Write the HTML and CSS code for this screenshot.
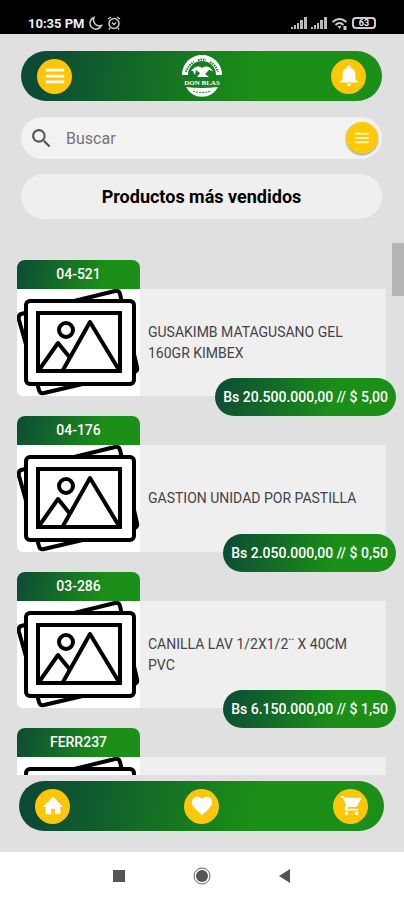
FILE: index.html
```html
<!DOCTYPE html>
<html lang="es">
<head>
  <meta charset="UTF-8" />
  <meta name="viewport" content="width=device-width, initial-scale=1.0"/>
  <title>Don Blas - Productos</title>
  <link rel="stylesheet" href="styles.css">
</head>
<body>
  <!-- Iconos reutilizables -->
  <svg class="sprite" aria-hidden="true">
    <symbol id="icon-menu" viewBox="0 0 24 24">
      <path d="M2 4h20v3H2zM2 10.500h20v3H2zM2 17h20v3H2z"/>
    </symbol>
    <symbol id="icon-signal" viewBox="0 0 16 12">
      <path d="M0 10h2v2H0zM3 8h2v4H3zM6 6h2v6H6zM9 3h3v9H9zM13 0h3v12h-3z"/>
    </symbol>
    <symbol id="photo" viewBox="0 0 123 107">
      <g fill="#fff" stroke="#000" stroke-width="4" stroke-linejoin="round">
        <path d="M4 25 98 2q4-1 5 3l17 73q1 4-3 5L27 104q-4 1-5-3L2 31q-1-5 2-6z"/>
        <rect x="9" y="12" width="108" height="83" rx="4"/>
        <path stroke-linejoin="miter" d="M21 24h82v58H21z"/>
        <path fill="none" d="M22 81 41 54l13 16M46 81 73 33l29 48"/>
        <circle cx="49" cy="41" r="7" fill="none"/>
      </g>
    </symbol>
  </svg>

  <div class="status-bar">
    <span class="clock">10:35 PM</span>
    <svg class="status-icon" viewBox="0 0 14 14"><path d="M5 1.500a6 6 0 1 0 7.500 8A6 6 0 0 1 5 1.500z" fill="none" stroke="#ccc" stroke-width="1.500"/></svg>
    <svg class="status-icon" viewBox="0 0 14 14"><g fill="none" stroke="#ccc" stroke-width="1.500"><circle cx="7" cy="7.500" r="5"/><path d="M1 3l3-2M13 3l-3-2M5 6.500l2 2 2-2M3 12l-1 1.500M11 12l1 1.500"/></g></svg>
    <div class="status-right">
      <svg class="signal"><use href="#icon-signal"/></svg>
      <svg class="signal"><use href="#icon-signal"/></svg>
      <svg class="wifi" viewBox="0 0 16 13"><g fill="none" stroke="#ccc" stroke-width="2"><path d="M1 5q7-6 14 0M4 8q4-4 8 0"/></g><path d="M6 9h4l-2 3zM12 9h3v4h-3z" fill="#ccc"/></svg>
      <span class="battery">63</span>
    </div>
  </div>

  <div class="app">
    <header class="bar">
      <button class="round-btn" aria-label="Menú"><svg viewBox="0 0 24 24"><use href="#icon-menu"/></svg></button>
      <svg class="logo" viewBox="0 0 42 42" role="img" aria-label="Don Blas">
        <path d="M4 20a17 17 0 0 1 34 0" fill="none" stroke="#fff" stroke-width="6"/>
        <path d="M5 17q2-7 8-10M17 5q4-1 8 0M29 7q6 3 8 10" fill="none" stroke="#17801a" stroke-width="2" stroke-dasharray="1.500 1"/>
        <path d="M10 16q6-7 11-3 6-4 11 3l-4-1-4 4 4 3H16l3-4-4-3-1 5-2-4z" fill="#fff"/>
        <path d="M5 32q16 2 32 0a18 18 0 0 1-32 0z" fill="#fff"/>
        <path d="M12 36q9 3 18 0" fill="none" stroke="#17801a" stroke-width="1" stroke-dasharray="2 1"/>
        <text x="21" y="30" text-anchor="middle">DON BLAS</text>
      </svg>
      <button class="round-btn" aria-label="Notificaciones"><svg viewBox="0 0 24 24"><path d="M12 23a2.500 2.500 0 0 0 2.500-2.500h-5A2.500 2.500 0 0 0 12 23zm7-7v-6c0-3.500-2-6-5-7V2.500a2 2 0 0 0-4 0V3c-3 1-5 3.500-5 7v6l-3 2v1h20v-1z"/></svg></button>
    </header>

    <form class="search">
      <label for="buscar" aria-label="Buscar"><svg viewBox="0 0 24 24"><path d="M15.500 14h-.8l-.3-.3A6.500 6.500 0 1 0 13.700 14.400l.3.300v.8l5 5 1.500-1.500zm-6 0a4.500 4.500 0 1 1 0-9 4.500 4.500 0 0 1 0 9z"/></svg></label>
      <input type="text" id="buscar" placeholder="Buscar">
      <button type="button" class="round-btn small" aria-label="Filtros"><svg viewBox="0 0 24 24"><use href="#icon-menu"/></svg></button>
    </form>

    <h1 class="title">Productos más vendidos</h1>

    <main class="products">
      <div class="scroll-thumb"></div>

      <article class="product">
        <div class="code">04-521</div>
        <div class="card">
          <svg class="photo"><use href="#photo"/></svg>
          <p class="name">GUSAKIMB MATAGUSANO GEL 160GR KIMBEX</p>
        </div>
        <div class="price">Bs 20.500.000,00 // $ 5,00</div>
      </article>

      <article class="product">
        <div class="code">04-176</div>
        <div class="card">
          <svg class="photo"><use href="#photo"/></svg>
          <p class="name">GASTION UNIDAD POR PASTILLA</p>
        </div>
        <div class="price">Bs 2.050.000,00 // $ 0,50</div>
      </article>

      <article class="product">
        <div class="code">03-286</div>
        <div class="card">
          <svg class="photo"><use href="#photo"/></svg>
          <p class="name">CANILLA LAV 1/2X1/2¨ X 40CM PVC</p>
        </div>
        <div class="price">Bs 6.150.000,00 // $ 1,50</div>
      </article>

      <article class="product">
        <div class="code">FERR237</div>
        <div class="card">
          <svg class="photo"><use href="#photo"/></svg>
        </div>
      </article>
    </main>

    <nav class="bar bottom">
      <button class="round-btn" aria-label="Inicio"><svg viewBox="0 0 24 24"><path d="M10 21v-6h4v6h6v-8h3L12 2 1 13h3v8z"/></svg></button>
      <button class="round-btn" aria-label="Favoritos"><svg viewBox="0 0 24 24"><path d="M12 22 10.500 20.500C5 15.500 1 12 1 7.800 1 4.400 3.700 2 7 2c2 0 3.800.900 5 2.400C13.200 2.900 15 2 17 2c3.300 0 6 2.400 6 5.800 0 4.200-4 7.700-9.500 12.700z"/></svg></button>
      <button class="round-btn" aria-label="Carrito"><svg viewBox="0 0 24 24"><path d="M7 18a2 2 0 1 0 0 4 2 2 0 0 0 0-4zM1 1v2h2l3.600 8L5.200 14c-.7 1.300.200 3 1.800 3h13v-2H7.400l1.100-2h8.500c.7 0 1.400-.4 1.700-1L23 4c.3-.7-.2-1-.8-1H5.200l-1-2zM18 18a2 2 0 1 0 0 4 2 2 0 0 0 0-4z"/></svg></button>
    </nav>
  </div>

  <div class="system-nav">
    <svg viewBox="0 0 20 20"><path d="M4 4h12v12H4z"/></svg>
    <svg viewBox="0 0 20 20"><circle cx="10" cy="10" r="6"/><circle cx="10" cy="10" r="8" fill="none" stroke="#666" stroke-width="1"/></svg>
    <svg viewBox="0 0 20 20"><path d="M4 10 15 3v14z"/></svg>
  </div>
</body>
</html>
```
FILE: styles.css
```css
* {
  box-sizing: border-box;
}

body {
  margin: 0;
  height: 100vh;
  display: flex;
  flex-direction: column;
  font-family: Roboto, sans-serif;
  background: #e0e0e0;
}

button {
  border: none;
  padding: 0;
  cursor: pointer;
}

.sprite {
  position: absolute;
  width: 0;
  height: 0;
}

/* Barra de estado */
.status-bar {
  display: flex;
  align-items: center;
  gap: 4px;
  height: 34px;
  padding: 12px 28px 0;
  background: #000;
  color: #eee;
}

.clock {
  font-size: 13px;
  font-weight: bold;
}

.status-icon {
  width: 14px;
  height: 14px;
}

.status-right {
  display: flex;
  align-items: center;
  gap: 4px;
  margin-left: auto;
}

.signal {
  width: 16px;
  height: 12px;
  fill: #bbb;
}

.wifi {
  width: 17px;
  height: 13px;
}

.battery {
  width: 24px;
  border: 2px solid #ccc;
  border-radius: 4px;
  font-size: 9px;
  line-height: 8px;
  font-weight: bold;
  text-align: center;
}

/* Contenido */
.app {
  flex: 1;
  min-height: 0;
  display: flex;
  flex-direction: column;
  padding: 17px 22px 21px 21px;
}

.bar {
  display: flex;
  flex-shrink: 0;
  justify-content: space-between;
  align-items: center;
  height: 50px;
  padding: 0 16px;
  border-radius: 25px;
  background: linear-gradient(100deg, #0d4a36 5%, #1b8f17 65%);
}

.bottom {
  margin: 6px -2px 0;
}

.round-btn {
  display: flex;
  align-items: center;
  justify-content: center;
  width: 35px;
  height: 35px;
  border-radius: 50%;
  background: #fdc60a;
}

.round-btn svg {
  width: 22px;
  height: 22px;
  fill: #fff;
}

.round-btn.small {
  width: 32px;
  height: 32px;
  background: #fccb05;
  box-shadow: 0 1px 2px rgba(0, 0, 0, 0.4);
}

.round-btn.small svg {
  width: 16px;
  height: 16px;
  fill: #fff3b8;
}

.logo {
  width: 42px;
  height: 42px;
}

.logo text {
  font-family: "Liberation Serif", serif;
  font-size: 7px;
  font-weight: bold;
  fill: #fff;
}

.search {
  display: flex;
  flex-shrink: 0;
  align-items: center;
  height: 42px;
  margin-top: 16px;
  padding: 0 4px 0 8px;
  border-radius: 21px;
  background: #f2f2f2;
}

.search label {
  display: flex;
}

.search label svg {
  width: 25px;
  height: 25px;
  fill: #555;
}

.search input {
  flex: 1;
  min-width: 0;
  padding: 0 12px;
  border: none;
  outline: none;
  background: none;
  font-family: inherit;
  font-size: 16px;
}

.search input::placeholder {
  color: #757575;
}

.title {
  flex-shrink: 0;
  margin: 15px 0 0;
  border-radius: 23px;
  background: #efefef;
  font-size: 18px;
  font-weight: bold;
  line-height: 45px;
  text-align: center;
}

/* Lista de productos */
.products {
  position: relative;
  flex: 1;
  min-height: 0;
  overflow: hidden;
  margin: 23px -22px 0 -4px;
  padding: 18px 18px 0 0;
}

.scroll-thumb {
  position: absolute;
  top: 1px;
  right: 0;
  width: 12px;
  height: 53px;
  background: #b5b5b5;
}

.product {
  position: relative;
  margin-bottom: 20px;
}

.code {
  width: 123px;
  border-radius: 8px 8px 0 0;
  background: linear-gradient(105deg, #0d4a36, #1b8f17 70%);
  color: #fff;
  font-size: 14px;
  font-weight: 500;
  line-height: 29px;
  text-align: center;
}

.card {
  display: flex;
  align-items: center;
  border-radius: 0 0 0 6px;
  background: #efefef;
}

.photo {
  flex-shrink: 0;
  width: 123px;
  height: 107px;
  border-radius: 0 0 0 6px;
  background: #fff;
}

.name {
  margin: 0;
  padding: 0 24px 0 8px;
  color: #444;
  font-size: 14px;
  line-height: 21px;
}

.price {
  position: absolute;
  right: -10px;
  bottom: -20px;
  padding: 0 8px;
  border-radius: 19px;
  background: linear-gradient(105deg, #0d4a36, #1b8f17 65%);
  color: #fff;
  font-size: 14px;
  font-weight: 500;
  line-height: 38px;
}

/* Botones del sistema */
.system-nav {
  display: flex;
  justify-content: center;
  align-items: center;
  gap: 63px;
  height: 48px;
  background: #fff;
}

.system-nav svg {
  width: 20px;
  height: 20px;
  fill: #555;
}
```
